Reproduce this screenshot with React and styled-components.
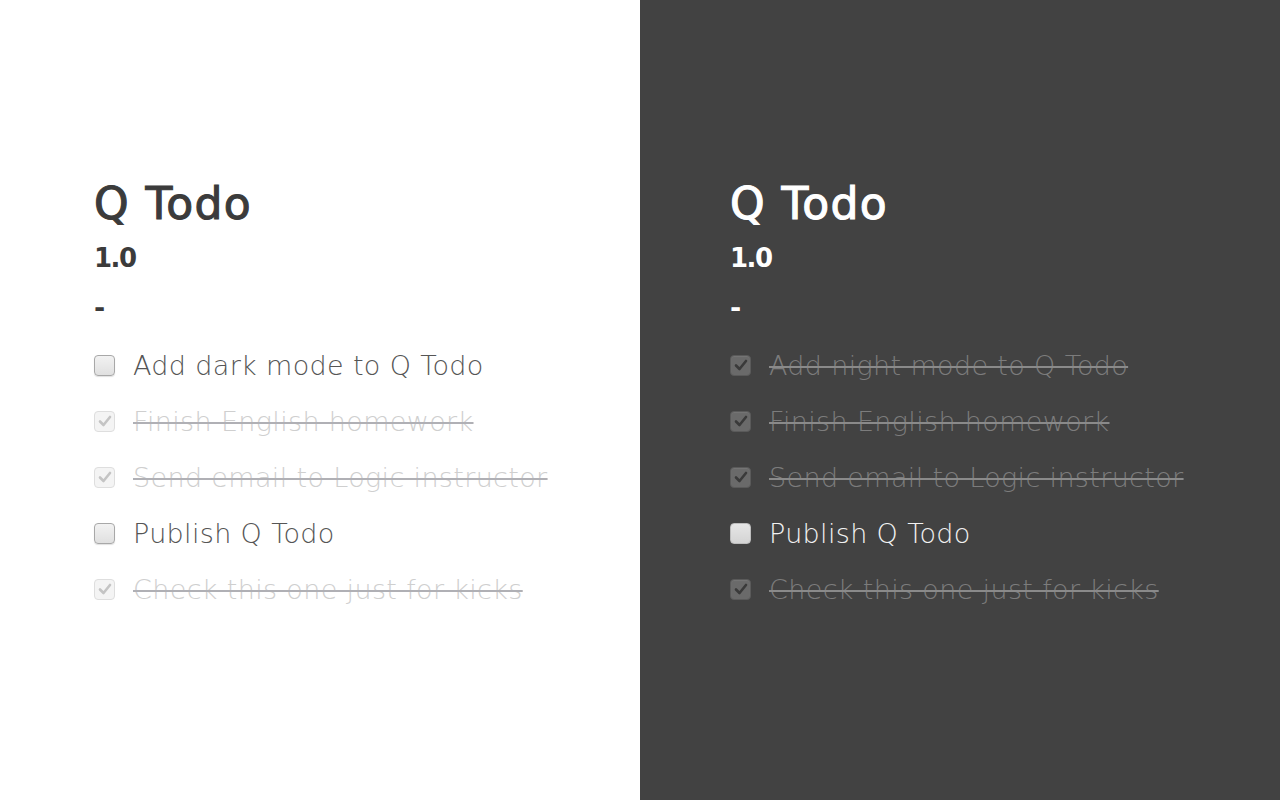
import React from "react";
import styled, { createGlobalStyle } from "styled-components";

const Global = createGlobalStyle`
  html, body { margin: 0; padding: 0; }
  body { font-family: "DejaVu Sans", "Open Sans", sans-serif; }
`;

const Page = styled.div`
  display: grid;
  grid-template-columns: 1fr 1fr;
  width: 1280px;
  height: 800px;
`;

const Panel = styled.section`
  background: ${(p) => (p.$dark ? "#424242" : "#ffffff")};
  padding: 174px 0 0 ${(p) => (p.$dark ? 90 : 94)}px;
  box-sizing: border-box;
`;

const Title = styled.h1`
  margin: 0;
  font-size: 44px;
  line-height: 60px;
  font-weight: 400;
  letter-spacing: 1.4px;
  -webkit-text-stroke: 1.1px currentColor;
  color: ${(p) => (p.$dark ? "#ffffff" : "#3b3b3b")};
`;

const Version = styled.h2`
  margin: 1px 0 0;
  font-size: 26px;
  line-height: 46px;
  font-weight: 700;
  letter-spacing: -1.5px;
  color: ${(p) => (p.$dark ? "#ffffff" : "#3b3b3b")};
`;

const Dash = styled.div`
  margin-top: 2px;
  font-size: 27px;
  line-height: 50px;
  font-weight: 700;
  color: ${(p) => (p.$dark ? "#ffffff" : "#3b3b3b")};
`;

const List = styled.ul`
  list-style: none;
  margin: 4px 0 0;
  padding: 0;
`;

const Row = styled.li`
  display: flex;
  align-items: center;
  gap: 18px;
  height: 56px;
`;

const Box = styled.span`
  flex: none;
  width: 21px;
  height: 21px;
  box-sizing: border-box;
  border-radius: 4px;
  display: flex;
  align-items: center;
  justify-content: center;
  ${(p) =>
    p.$dark
      ? p.$checked
        ? `background: #6a6a6a; border: 1px solid #5a5a5a; box-shadow: inset 0 1px 1px rgba(255,255,255,0.08);`
        : `background: linear-gradient(#e6e6e6, #d4d4d4); border: 1px solid #bdbdbd;`
      : p.$checked
      ? `background: #f4f4f4; border: 1px solid #dedede;`
      : `background: linear-gradient(#f2f2f2, #e0e0e0); border: 1px solid #a8a8a8; box-shadow: 0 1px 1px rgba(0,0,0,0.12);`}
`;

const Label = styled.span`
  font-size: 27px;
  font-weight: 200;
  letter-spacing: 0.35px;
  white-space: nowrap;
  color: ${(p) =>
    p.$dark ? (p.$checked ? "#7c7c7c" : "#f2f2f2") : p.$checked ? "#cfcfcf" : "#555555"};
  text-decoration: ${(p) => (p.$checked ? "line-through" : "none")};
  text-decoration-color: ${(p) => (p.$dark ? "#8a8a8a" : "#b0b0b5")};
  text-decoration-thickness: 2px;
`;

const Check = ({ color }) => (
  <svg width="14" height="14" viewBox="0 0 14 14">
    <path d="M2 7.5 L5.5 11 L12 3" fill="none" stroke={color} strokeWidth="2.6" strokeLinecap="round" strokeLinejoin="round" />
  </svg>
);

const Todo = ({ dark, checked, children }) => (
  <Row>
    <Box $dark={dark} $checked={checked}>
      {checked && <Check color={dark ? "#3a3a3a" : "#c4c4c4"} />}
    </Box>
    <Label $dark={dark} $checked={checked}>{children}</Label>
  </Row>
);

const Side = ({ dark, items }) => (
  <Panel $dark={dark}>
    <Title $dark={dark}>Q Todo</Title>
    <Version $dark={dark}>1.0</Version>
    <Dash $dark={dark}>-</Dash>
    <List>
      {items.map(([t, c]) => (
        <Todo key={t} dark={dark} checked={c}>{t}</Todo>
      ))}
    </List>
  </Panel>
);

export default function App() {
  return (
    <>
      <Global />
      <Page>
        <Side
          items={[
            ["Add dark mode to Q Todo", false],
            ["Finish English homework", true],
            ["Send email to Logic instructor", true],
            ["Publish Q Todo", false],
            ["Check this one just for kicks", true],
          ]}
        />
        <Side
          dark
          items={[
            ["Add night mode to Q Todo", true],
            ["Finish English homework", true],
            ["Send email to Logic instructor", true],
            ["Publish Q Todo", false],
            ["Check this one just for kicks", true],
          ]}
        />
      </Page>
    </>
  );
}
